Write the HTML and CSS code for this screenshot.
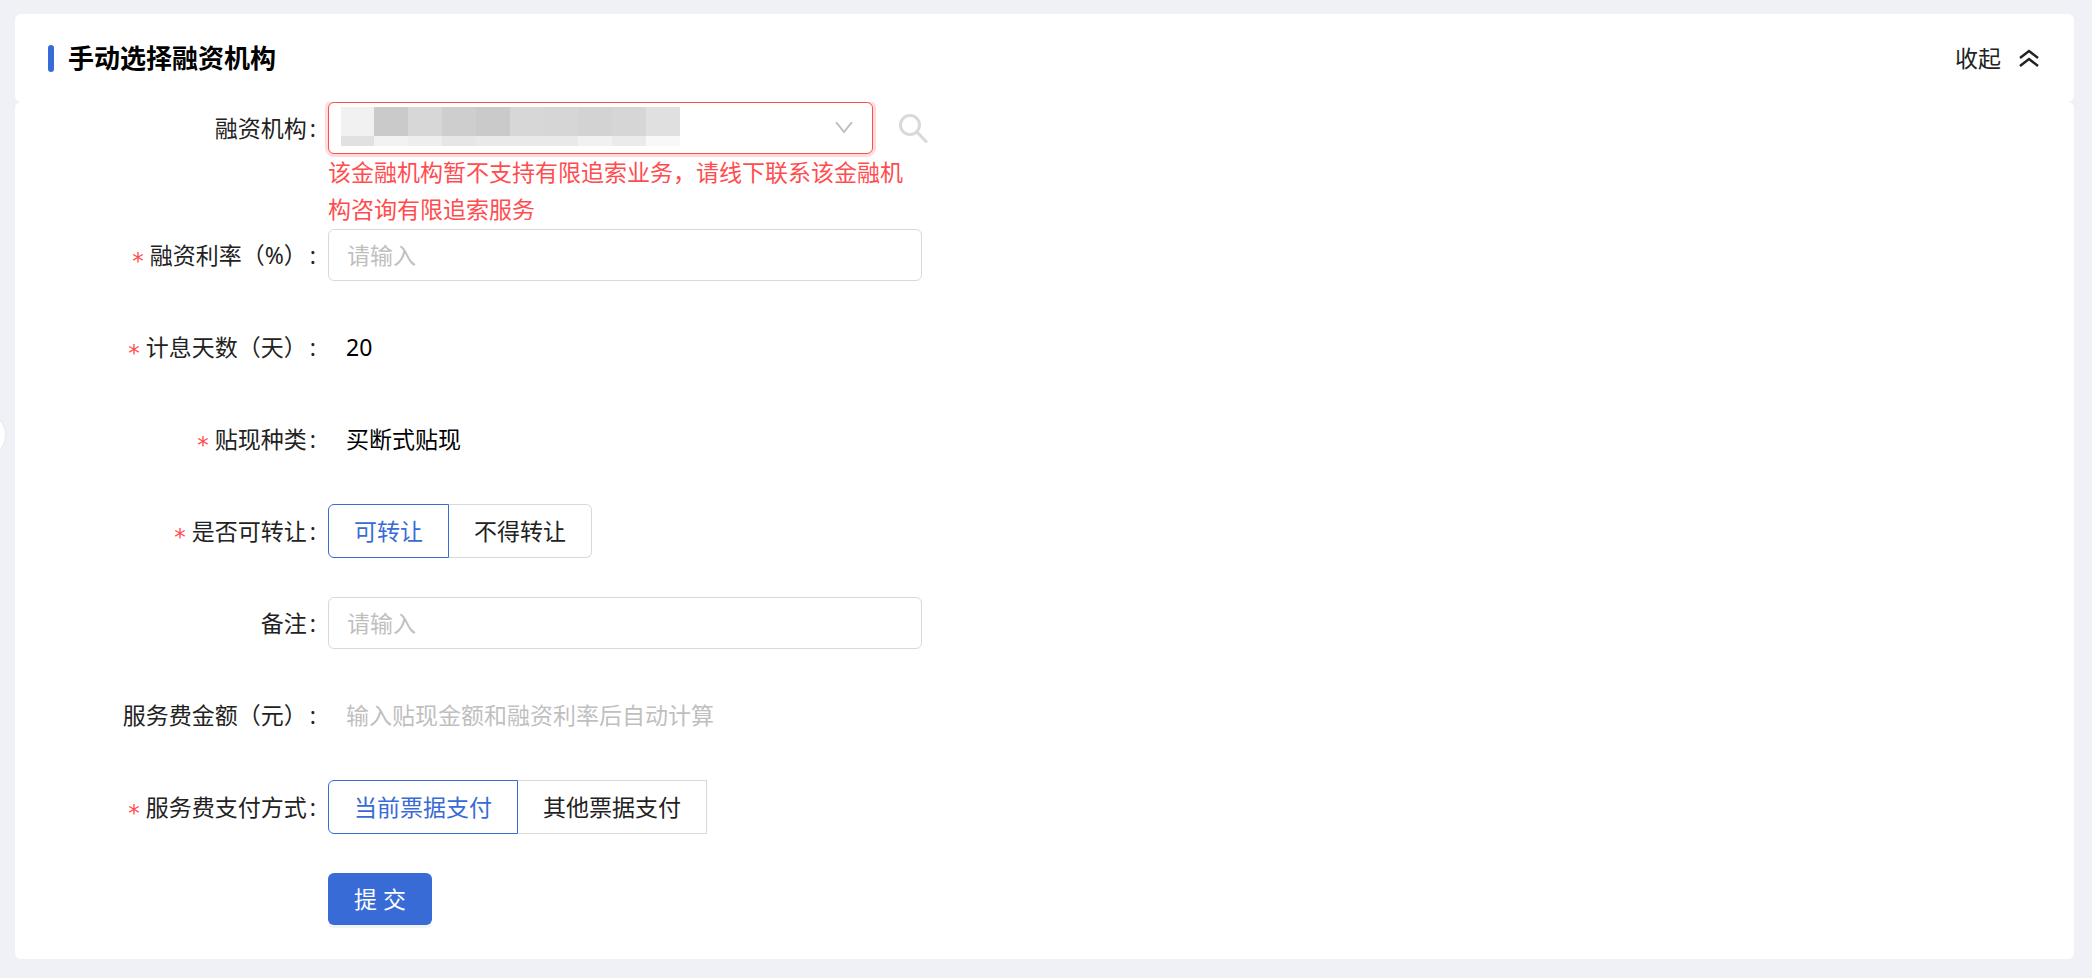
FILE: index.html
```html
<!DOCTYPE html>
<html lang="zh-CN">

<head>
     <meta charset="utf-8">
     <title>手动选择融资机构</title>
     <link rel="stylesheet" href="styles.css">
</head>

<body>
     <button type="button" class="drawer" aria-label="展开菜单"></button>

     <header class="card head">
          <h1>手动选择融资机构</h1>
          <button type="button" class="fold">
               收起
               <svg width="20" height="18" viewBox="0 0 20 18" fill="none" stroke="#222" stroke-width="2.4">
                    <path d="M1 9 L10 2 L19 9 M1 17 L10 10 L19 17" />
               </svg>
          </button>
     </header>

     <form class="card form">
          <div class="row first">
               <label class="name" for="org">融资机构</label>
               <div class="control">
                    <div class="org">
                         <div class="select">
                              <select id="org">
                                   <option></option>
                              </select>
                              <!-- masked name of the institution -->
                              <svg class="mask" width="339" height="39" viewBox="0 0 339 39" shape-rendering="crispEdges">
                                   <rect x="0" width="33" height="29" fill="#f1f1f1" />
                                   <rect x="33" width="34" height="29" fill="#cacaca" />
                                   <rect x="67" width="34" height="29" fill="#d7d7d7" />
                                   <rect x="101" width="34" height="29" fill="#cecece" />
                                   <rect x="135" width="34" height="29" fill="#cacaca" />
                                   <rect x="169" width="34" height="29" fill="#d7d7d7" />
                                   <rect x="203" width="34" height="29" fill="#d6d6d6" />
                                   <rect x="237" width="34" height="29" fill="#d3d3d3" />
                                   <rect x="271" width="34" height="29" fill="#d6d6d6" />
                                   <rect x="305" width="34" height="29" fill="#e0e0e0" />
                                   <rect x="0" y="29" width="33" height="10" fill="#e1e1e1" />
                                   <rect x="33" y="29" width="34" height="10" fill="#f2f2f2" />
                                   <rect x="67" y="29" width="34" height="10" fill="#eeeeee" />
                                   <rect x="101" y="29" width="34" height="10" fill="#e6e6e6" />
                                   <rect x="135" y="29" width="102" height="10" fill="#e9e9e9" />
                                   <rect x="237" y="29" width="34" height="10" fill="#f1f1f1" />
                                   <rect x="271" y="29" width="34" height="10" fill="#ebebeb" />
                                   <rect x="305" y="29" width="34" height="10" fill="#f8f8f8" />
                              </svg>
                              <svg class="arrow" width="18" height="12" viewBox="0 0 18 12" fill="none" stroke="#bfbfbf" stroke-width="2">
                                   <path d="M1 0 L9 10 L17 0" />
                              </svg>
                         </div>
                         <button type="button" class="search" aria-label="搜索">
                              <svg width="30" height="30" viewBox="0 0 30 30" fill="none" stroke="#d9d9d9" stroke-width="3">
                                   <circle cx="12" cy="12" r="9.5" />
                                   <path d="M19 19 L29 29.5" />
                              </svg>
                         </button>
                    </div>
                    <p class="error">该金融机构暂不支持有限追索业务，请线下联系该金融机构咨询有限追索服务</p>
               </div>
          </div>

          <div class="row">
               <label class="name must" for="rate">融资利率（%）</label>
               <input class="text" type="text" id="rate" placeholder="请输入">
          </div>

          <div class="row">
               <span class="name must">计息天数（天）</span>
               <span class="value">20</span>
          </div>

          <div class="row">
               <span class="name must">贴现种类</span>
               <span class="value">买断式贴现</span>
          </div>

          <div class="row">
               <span class="name must" id="transfer">是否可转让</span>
               <div class="group" role="radiogroup" aria-labelledby="transfer">
                    <label><input type="radio" name="transfer" checked>可转让</label>
                    <label class="round"><input type="radio" name="transfer">不得转让</label>
               </div>
          </div>

          <div class="row">
               <label class="name" for="note">备注</label>
               <input class="text" type="text" id="note" placeholder="请输入">
          </div>

          <div class="row">
               <span class="name">服务费金额（元）</span>
               <span class="value gray">输入贴现金额和融资利率后自动计算</span>
          </div>

          <div class="row">
               <span class="name must" id="pay">服务费支付方式</span>
               <div class="group" role="radiogroup" aria-labelledby="pay">
                    <label><input type="radio" name="pay" checked>当前票据支付</label>
                    <label><input type="radio" name="pay">其他票据支付</label>
               </div>
          </div>

          <div class="row last">
               <button type="submit" class="submit">提 交</button>
          </div>
     </form>
</body>

</html>
```

FILE: styles.css
```css
* {
     box-sizing: border-box;
}

body {
     margin: 0;
     padding: 14px 18px 18px 15px;
     background-color: #eff1f6;
     color: #222;
     font-family: "Noto Sans", "Noto Sans CJK SC", sans-serif;
     font-size: 23px;
     line-height: 37px;
}

button, input, select {
     font: inherit;
     color: inherit;
}

button {
     cursor: pointer;
}

.card {
     background-color: white;
     border-radius: 6px;
}

/* half hidden handle of the side menu */
.drawer {
     position: absolute;
     left: -41px;
     top: 412px;
     width: 46px;
     height: 46px;
     padding: 0;
     border: 0;
     border-radius: 50%;
     background-color: white;
     box-shadow: 0 0 2px rgba(0, 0, 0, 0.1);
}

.head {
     display: flex;
     justify-content: space-between;
     align-items: center;
     height: 88px;
     padding: 0 35px 0 33px;
}

h1 {
     display: flex;
     align-items: center;
     gap: 14px;
     margin: 0;
     color: black;
     font-size: 26px;
     font-weight: bold;
}

h1::before {
     content: "";
     width: 6px;
     height: 27px;
     border-radius: 3px;
     background-color: #386bd5;
}

.fold {
     display: flex;
     align-items: center;
     gap: 18px;
     padding: 0;
     border: 0;
     background: none;
}

.form {
     overflow: hidden;
     padding-bottom: 33px;
}

.row {
     display: grid;
     grid-template-columns: 313px minmax(0, 594px);
     align-items: center;
     min-height: 54px;
     margin-bottom: 38px;
}

.row.first {
     align-items: start;
     margin-bottom: 0;
}

.row.last {
     margin-bottom: 0;
}

.name {
     padding-right: 12px;
     text-align: right;
}

.first .name {
     line-height: 52px;
}

.name::after {
     content: ":";
     margin-left: 3px;
}

.must::before {
     content: "*";
     margin-right: 6px;
     color: #ff4d4f;
     font-family: "DejaVu Sans", sans-serif;
     line-height: 0;
     vertical-align: -5px;
}

.org {
     display: flex;
     align-items: center;
     gap: 25px;
}

.select {
     position: relative;
     flex: 1;
}

.select select {
     display: block;
     width: 100%;
     height: 52px;
     appearance: none;
     border: 1px solid #ff4d4f;
     border-radius: 6px;
     background-color: white;
     box-shadow: 0 0 0 3px rgba(255, 77, 79, 0.2);
}

.mask {
     position: absolute;
     left: 13px;
     top: 5px;
     pointer-events: none;
}

.arrow {
     position: absolute;
     right: 20px;
     top: 20px;
     pointer-events: none;
}

.search {
     display: flex;
     margin-right: -6px;
     padding: 0;
     border: 0;
     background: none;
}

.error {
     margin: 0;
     color: #ff4d4f;
}

.text {
     width: 100%;
     height: 52px;
     padding: 0 18px;
     border: 1px solid #d9d9d9;
     border-radius: 6px;
     background-color: white;
}

.text::placeholder {
     color: #bfbfbf;
}

.value {
     padding-left: 18px;
     color: black;
}

.value.gray {
     color: #bfbfbf;
}

.group {
     display: flex;
}

.group label {
     height: 54px;
     padding: 0 25px;
     border: 1px solid #d9d9d9;
     border-left: 0;
     line-height: 52px;
     cursor: pointer;
}

.group label:first-child {
     border-left: 1px solid #d9d9d9;
     border-radius: 6px 0 0 6px;
}

.group label.round {
     border-radius: 0 6px 6px 0;
}

.group label:has(:checked) {
     border-color: #386bd5;
     color: #386bd5;
}

.group input {
     position: absolute;
     opacity: 0;
     pointer-events: none;
}

.submit {
     grid-column: 2;
     justify-self: start;
     height: 52px;
     padding: 0 26px;
     border: 0;
     border-radius: 6px;
     background-color: #386bd5;
     box-shadow: 0 3px 0 rgba(0, 0, 0, 0.05);
     color: white;
}
```
